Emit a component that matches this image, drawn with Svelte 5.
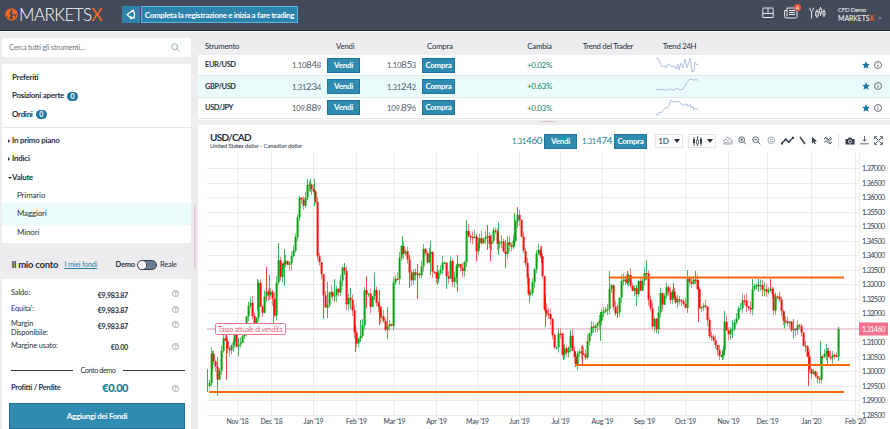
<script>
  const instruments = [
    {
      name: 'EUR/USD',
      sell: ['1.10', '84', '8'],
      buy: ['1.10', '85', '3'],
      change: '+0.02%',
      spark: '0,3 2,2 4,7 6,11 8,9 10,12 12,8 14,9 16,11 18,10 20,13 22,8 23,14 25,7 27,12 29,3 31,12 33,5 34,2 36,16 38,15 39,6 41,9 42,8'
    },
    {
      name: 'GBP/USD',
      sell: ['1.31', '23', '4'],
      buy: ['1.31', '24', '2'],
      change: '+0.63%',
      spark: '0,12 3,13 6,12 9,13 12,13 15,12 18,13 21,11 24,13 27,12 29,9 31,5 33,3 35,2 37,3 39,3 40,2 42,4',
      active: true
    },
    {
      name: 'USD/JPY',
      sell: ['109.', '88', '9'],
      buy: ['109.', '89', '6'],
      change: '+0.03%',
      spark: '0,15 2,16 3,13 5,14 7,11 10,9 12,8 14,4 15,1 17,3 19,2 21,3 23,2 25,5 27,6 29,6 31,5 32,8 34,5 35,9 37,7 38,11 40,9 42,11'
    }
  ];

  const groups = ['Primario', 'Maggiori', 'Minori'];

  const account = [
    { label: 'Saldo:', value: '€9,983.87' },
    { label: "Equita':", value: '€9,983.87' },
    { label: 'Margin Disponibile:', value: '€9,983.87', tall: true },
    { label: 'Margine usato:', value: '€0.00' }
  ];

  const months = [
    [39, "Nov '18"], [73, "Dec '18"], [115, "Jan '19"], [158, "Feb '19"],
    [196, "Mar '19"], [238, "Apr '19"], [279, "May '19"], [321, "Jun '19"],
    [362, "Jul '19"], [404, "Aug '19"], [446, "Sep '19"], [487, "Oct '19"],
    [530, "Nov '19"], [569, "Dec '19"], [613, "Jan '20"], [657, "Feb '20"]
  ];

  const TOP = 152;
  const LEFT = 198;
  const STEP = 14.53;

  // 1.37000 down to 1.28500
  const prices = Array.from({ length: 18 }, (_, i) => ({
    y: 16.5 + i * STEP,
    label: (1.37 - i * 0.005).toFixed(5)
  }));

  // daily closes: x,y
  const track = `208,386 210,388 211,356 214,364 216,374 217.5,389 219,365 222,345 223,335 226,348 228,357 231,343 234,334
    237,345 240,339 243,338 244,330 246,315 248,302 251,303 253,320 256,322 258,286 260,308 262,314 264,295 266,287 268,295
    270,290 272,300 274,318 275,295 277,265 278,260 280,278 282,262 285,260 287,270 290,261 293,253 296,230 298,212 299,198
    302,200 304,206 307,188 309,187 311,190 314,188 316,225 317,260 320,265 322,285 324,309 326,305 328,295 331,292 333,298
    335,293 338,291 340,284 341,268 345,270 346,306 349,300 351,295 353,328 355,343 357,346 359,335 361,332 363,308 364,283
    366,294 368,290 370,305 373,285 375,300 378,310 380,323 382,315 384,325 386,332 388,318 390,327 392,330 393,286 397,280
    399,258 400,243 403,250 406,250 408,262 410,285 413,275 416,272 418,280 420,275 422,250 424,247 426,258 428,262 430,243
    432,270 434,272 437,280 439,272 442,260 444,264 446,280 448,276 450,262 452,278 454,275 457,262 460,265 463,270 465,248
    466,230 469,237 471,240 474,240 476,254 479,238 482,242 485,235 488,240 490,248 492,235 495,233 497,247 500,242 503,250
    505,254 507,240 510,246 512,245 514,225 517,218 520,220 521,245 524,258 526,265 527,293 530,296 532,285 534,275 536,258
    538,252 541,255 543,292 545,318 547,310 549,316 551,322 553,344 556,344 558,332 560,335 562,355 565,350 568,349 570,335
    572,350 575,365 577,358 580,347 583,357 586,357 588,338 590,328 593,325 595,323 598,328 600,312 603,312 606,312 608,296
    610,280 612,300 614,312 617,310 619,295 621,277 624,283 628,280 629,275 632,290 634,284 636,299 638,282 640,290 643,275
    646,272 648,302 650,310 652,324 655,320 656,330 658,310 660,292 662,308 664,292 667,290 669,298 671,295 674,295 676,303
    680,302 683,303 685,310 687,277 690,280 692,286 695,277 698,290 699,312 702,305 705,305 707,322 709,335 711,335 713,343
    716,350 719,354 722,355 725,318 727,330 730,332 732,328 735,320 738,308 741,306 744,298 747,305 750,312 751,292 754,284
    757,290 759,284 761,292 764,289 766,293 769,284 771,288 773,318 775,296 778,300 781,305 783,325 786,318 789,322 792,338
    794,328 797,327 800,325 802,343 805,349 808,356 809,375 811,378 813,372 816,376 818,382 820,362 822,353 824,358 826,352
    828,358 830,362 833,353 836,358 837,350 838,329`
    .trim()
    .split(/\s+/)
    .map((p) => p.split(',').map(Number));

  // long wicks of single days: x, high, low, up
  const spikes = [
    [207, 369, 392, 1], [212, 351, 370, 1], [217, 357, 396, 1], [226, 334, 380, 0], [238, 338, 356, 1],
    [257, 279, 310, 1], [266, 267, 300, 0], [269, 275, 300, 1], [273, 300, 332, 1], [278, 243, 275, 1],
    [284, 249, 286, 1], [307, 179, 200, 1], [310, 179, 192, 1], [314, 179, 206, 1], [323, 284, 319, 0],
    [327, 282, 318, 1], [334, 279, 302, 1], [344, 263, 275, 1], [350, 288, 309, 1], [355, 325, 352, 0],
    [360, 320, 342, 1], [366, 276, 308, 0], [374, 273, 300, 1], [379, 290, 325, 0], [387, 307, 339, 1],
    [402, 236, 255, 1], [409, 255, 288, 0], [417, 264, 299, 0], [430, 241, 275, 1], [437, 265, 285, 1],
    [446, 265, 289, 1], [457, 255, 292, 0], [466, 220, 248, 1], [476, 235, 261, 0], [487, 225, 250, 0],
    [490, 235, 261, 0], [498, 222, 255, 1], [505, 240, 268, 1], [517, 207, 225, 0], [514, 213, 246, 1],
    [529, 291, 303, 1], [541, 246, 263, 0], [545, 295, 327, 0], [563, 345, 360, 0], [570, 330, 340, 1],
    [575, 352, 367, 0], [582, 345, 366, 0], [600, 312, 341, 1], [609, 271, 290, 1], [617, 305, 318, 0],
    [627, 271, 285, 0], [636, 285, 306, 1], [646, 260, 280, 1], [656, 320, 333, 1], [673, 283, 298, 0],
    [687, 270, 312, 1], [695, 271, 284, 1], [698, 280, 322, 0], [722, 350, 360, 1], [724, 311, 345, 1],
    [732, 320, 338, 1], [752, 279, 300, 1], [758, 279, 292, 1], [770, 279, 290, 0], [775, 294, 312, 1],
    [784, 312, 328, 1], [793, 319, 338, 1], [808, 352, 386, 0], [820, 341, 365, 1], [827, 348, 364, 1], [838, 327, 361, 1]
  ];

  // keeps body and wick lengths stable between renders
  let seed = 11;
  function rnd() {
    seed = (seed * 16807) % 2147483647;
    return seed / 2147483647;
  }

  function closeAt(x) {
    const i = track.findIndex((p) => p[0] >= x);
    if (i <= 0) return track[i === 0 ? 0 : track.length - 1][1];
    const [x0, y0] = track[i - 1];
    const [x1, y1] = track[i];
    return y0 + ((y1 - y0) * (x - x0)) / (x1 - x0);
  }

  const candles = [];
  let prev = closeAt(208);
  for (let x = 209; x <= 838.5; x += 1.96) {
    const close = closeAt(x) + (x < 836 ? (rnd() - 0.5) * 8 : 0);
    candles.push({
      x: Math.round(x - LEFT),
      top: Math.min(prev, close) - TOP,
      h: Math.max(1.3, Math.abs(close - prev)),
      high: Math.min(prev, close) - TOP - rnd() * 7,
      low: Math.max(prev, close) - TOP + rnd() * 7,
      up: close <= prev
    });
    prev = close;
  }
</script>

{#snippet info()}
  <svg class="info" width="8" height="8" viewBox="0 0 8 8">
    <circle cx="4" cy="4" r="3.5" />
    <path d="M4 3.6V6M4 2v.8" />
  </svg>
{/snippet}

{#snippet help()}
  <svg class="info" width="7" height="7" viewBox="0 0 8 8">
    <circle cx="4" cy="4" r="3.5" />
    <path d="M2.9 3.1Q3 2 4 2t1.1 1Q5.1 3.6 4 4.2v.6M4 5.6v.7" />
  </svg>
{/snippet}

<div class="app">
  <header>
    <div class="logo">
      <svg width="13" height="13" viewBox="0 0 13 13">
        <circle cx="6.5" cy="6.5" r="5.6" fill="none" stroke="#f26a1b" stroke-width="1.2" />
        <path d="M1 4.5l2.500-3 2.500.5-.6 1.600L4 5l1.600 1.600L5 9l-1.200 2L2.600 8 1 6.500zM7 1.500l3 .8 1.800 3.200-.8 1-1.600-.6-1.400.6L7 5l.8-1.400zM7.500 7.500l2.500.3.6 1.400L8.600 11.600 7.400 10z" fill="#f26a1b" />
      </svg>
      <span>MARKETS<b>X</b></span>
    </div>
    <div class="promo">
      <span class="promo-icon">
        <svg width="11" height="11" viewBox="0 0 11 11">
          <path d="M1.2 5.5L7.2 1.2Q9.5 5 8 9L3 7.4zM4 8l1 1.8 1.8-.9" fill="none" stroke="#fff" stroke-width="1.2" />
        </svg>
      </span>
      <span class="promo-text">Completa la registrazione e inizia a fare trading</span>
    </div>
    <div class="tools">
      <svg width="12" height="12" viewBox="0 0 12 12">
        <path d="M.8 5.5V2.2Q.8 1 2 1h8q1.2 0 1.2 1.2v3.3M6 1v6M.5 6.5h11M.8 5.5v5h10.4v-5" />
      </svg>
      <div class="news">
        <svg width="14" height="12" viewBox="0 0 14 12">
          <path d="M3 1h10v8.5q0 1.5-1.5 1.5H2Q.6 11 .6 9.5V3.5H3M3 1v8.5M5 3.5h6M5 5.5h6M5 7.5h6" />
        </svg>
        <i>4</i>
      </div>
      <svg width="17" height="12" viewBox="0 0 17 12">
        <path d="M1 .8v2.4L2.6 4.5 4.2 3.2V.8M2.6 4.5v7M8 2.5v2M8 9v2M6.8 4.5h2.4V9H6.800zM11.5 0v2M11.5 6v3M10.3 2h2.400v4h-2.400zM15 2.5v2M15 8v2M14 4.500h2V8h-2z" />
      </svg>
    </div>
    <div class="user">
      <div>CFD Demo</div>
      <div>MARKETS<b>X</b></div>
    </div>
    <span class="caret light"></span>
  </header>

  <div class="body">
    <aside>
      <div class="search">
        <span>Cerca tutti gli strumenti...</span>
        <svg width="9" height="9" viewBox="0 0 9 9">
          <path d="M6 6l2.4 2.4M6.6 3.7a2.9 2.9 0 1 1-5.8 0 2.9 2.9 0 0 1 5.8 0z" fill="none" stroke="#7fa9a9" stroke-width=".9" />
        </svg>
      </div>

      <nav>
        <div class="links">
          <div>Preferiti</div>
          <div>Posizioni aperte <i class="count">0</i></div>
          <div>Ordini <i class="count">0</i></div>
        </div>
        <div class="tree">
          <div class="branch"><i class="closed"></i>In primo piano</div>
          <div class="branch"><i class="closed"></i>Indici</div>
          <div class="branch"><i class="open"></i>Valute</div>
          {#each groups as group}
            <div class="leaf" class:selected={group === 'Maggiori'}>{group}</div>
          {/each}
        </div>
      </nav>

      <div class="account-head">
        <strong>Il mio conto</strong>
        <u>I miei fondi</u>
        <span class="demo">Demo</span>
        <span class="toggle"></span>
        <span>Reale</span>
      </div>

      <section class="account">
        {#each account as row}
          <div class="money" class:tall={row.tall}>
            <span>{row.label}</span>
            <b>{row.value}</b>
            {@render help()}
          </div>
        {/each}
        <div class="divider">Conto demo</div>
        <div class="profit">
          <span>Profitti / Perdite</span>
          <b>€0.00</b>
          {@render help()}
        </div>
        <div class="fund">Aggiungi dei Fondi</div>
      </section>
    </aside>

    <div class="gutter"><span></span></div>

    <main>
      <div class="row head">
        <span>Strumento</span>
        <span class="h-sell">Vendi</span>
        <span class="h-buy">Compra</span>
        <span class="change">Cambia</span>
        <span class="mid">Trend del Trader</span>
        <span class="mid">Trend 24H</span>
      </div>
      <div class="quotes">
        {#each instruments as item}
          <div class="row" class:active={item.active}>
            <span class="name">{item.name}</span>
            <span class="deal"><span class="price">{item.sell[0]}<em>{item.sell[1]}</em>{item.sell[2]}</span><span class="btn">Vendi</span></span>
            <span class="deal"><span class="price">{item.buy[0]}<em>{item.buy[1]}</em>{item.buy[2]}</span><span class="btn">Compra</span></span>
            <span class="change green">{item.change}</span>
            <span></span>
            <svg class="spark" width="43" height="18" viewBox="0 0 43 18">
              <polyline points={item.spark} />
            </svg>
            <span class="marks">
              <svg width="8" height="8" viewBox="0 0 8 8">
                <path d="M4 .2l1.1 2.5 2.8.3-2.1 1.8.7 2.8L4 6.2 1.5 7.6l.7-2.8L.1 3l2.8-.3z" fill="#1f73a0" />
              </svg>
              {@render info()}
            </span>
          </div>
        {/each}
      </div>
      <div class="splitter"><span></span></div>

      <section class="chart">
        <div class="chart-head">
          <div class="pair">
            <h2>USD/CAD</h2>
            <p>United States dollar - Canadian dollar</p>
          </div>
          <div class="trade">
            <span class="price">1.31<em>460</em></span><span class="btn">Vendi</span>
            <span class="price second">1.31<em>474</em></span><span class="btn">Compra</span>
          </div>
          <div class="select">1D <i class="caret"></i></div>
          <div class="select kind">
            <svg width="11" height="11" viewBox="0 0 11 11">
              <path d="M2 1v9M5.5 0v10M9 1v9" stroke="#333c4b" stroke-width=".8" />
              <path d="M1 3h2v4H1zM8 3h2v4.5H8z" fill="#333c4b" />
              <path d="M4.5 4h2v4h-2z" fill="#fff" stroke="#333c4b" stroke-width=".7" />
            </svg>
            <i class="caret"></i>
          </div>
          <div class="icons">
            <svg class="faint" width="10" height="10" viewBox="0 0 10 10"><path d="M1 8V4l2-1 2 2 2-3 2 2v4zM1 8l3-2 2 1 3-2M3 1l3 1" /></svg>
            <svg width="9" height="9" viewBox="0 0 9 9"><circle cx="3.7" cy="3.7" r="2.9" /><path d="M5.9 5.9l2.4 2.4M2.2 3.7h3M3.7 2.2v3" /></svg>
            <svg width="9" height="9" viewBox="0 0 9 9"><circle cx="3.7" cy="3.7" r="2.9" /><path d="M5.9 5.9l2.4 2.4M2.2 3.7h3" /></svg>
            <svg class="faint" width="9" height="9" viewBox="0 0 9 9"><circle cx="4.3" cy="4.3" r="3.4" /><path d="M2.6 3.2h3.4M2.6 5.4h3.4" /></svg>
            <svg class="bold" width="13" height="9" viewBox="0 0 13 9"><path d="M1 7.3l3.7-4 3 2.7L12 1.8" /><path d="M0 6.5h2v2H0zM3.8 2.4h2v2h-2zM6.8 5h2v2h-2zM11 .8h2v2h-2z" fill="#333c4b" stroke="none" /></svg>
            <svg class="bold" width="7" height="9" viewBox="0 0 7 9"><path d="M1 1l5 7" /></svg>
            <svg width="7" height="9" viewBox="0 0 7 9"><path d="M1 .8l5 4.4-2.4.2 1.3 2.4-1 .5-1.2-2.4L1 7.4z" fill="#333c4b" stroke="none" /></svg>
            <svg width="10" height="9" viewBox="0 0 10 9"><path d="M1 3q2-3 4 0t4-1M1 6.5q2-3 4 0t4-1M2 1l6 7M8 1L6 3" /></svg>
            <span class="sep"></span>
            <svg width="10" height="8" viewBox="0 0 10 8"><path d="M.5 2H3L3.800.6h2.400L7 2h2.500v5.500h-9z" fill="#333c4b" stroke="none" /><circle cx="5" cy="4.5" r="1.6" stroke="#fff" stroke-width=".8" /></svg>
            <svg width="9" height="9" viewBox="0 0 9 9"><path d="M4.5 0v5M2.7 3.5l1.8 1.8 1.8-1.8M.2 7.8h8.600" /></svg>
            <svg width="9" height="9" viewBox="0 0 9 9"><path d="M.6 3V.6H3M6 .6h2.4V3M8.4 6v2.4H6M3 8.4H.6V6M1 1l7 7M8 1L1 8" /></svg>
          </div>
        </div>

        <svg class="plot" width="692" height="277" viewBox="0 0 692 277">
          <g class="grid">
            {#each prices as p}
              <path d="M9 {Math.floor(p.y)}.5H662" />
            {/each}
            {#each months as m}
              <path d="M{m[0]}.5 0V263" />
            {/each}
            <path d="M661.5 0V263" />
          </g>
          <path d="M9 177H662" stroke="#eac3d9" stroke-width="1.6" />
          {#each candles as c}
            <path d="M{c.x + 0.5} {c.high}V{c.low}" stroke={c.up ? '#5fbf74' : '#f4827c'} />
          {/each}
          {#each spikes as s}
            <path d="M{s[0] - LEFT + 0.5} {s[1] - TOP}V{s[2] - TOP}" stroke={s[3] ? '#3cb450' : '#f8433c'} />
          {/each}
          {#each candles as c}
            <rect x={c.x - 0.4} y={c.top} width="2" height={c.h} fill={c.up ? '#07a30f' : '#fb0d0d'} />
          {/each}
          <g class="levels">
            <path d="M411 125.5H646" />
            <path d="M377 213H652" />
            <path d="M11 240H646" />
          </g>
          <rect x="17.5" y="171.5" width="70" height="11" rx="1" fill="#fff" stroke="#ee7590" />
          <text class="rate" x="20" y="180" textLength="64">Tasso attuale di vendita</text>
          {#each prices as p, i}
            {#if i !== 11}
              <text x="664" y={p.y + 2.5} textLength="23">{p.label}</text>
            {/if}
          {/each}
          <rect x="661" y="170.5" width="29" height="13" fill="#f5728f" />
          <text class="now" x="664" y="179.5" textLength="23">1.31460</text>
          {#each months as m}
            <text class="month" x={m[0] + 0.5} y="272">{m[1]}</text>
          {/each}
        </svg>
      </section>
    </main>
  </div>
</div>

<style>
  :global(body) {
    margin: 0;
    background: #ededef;
  }

  .app {
    width: 890px;
    height: 429px;
    overflow: hidden;
    display: flex;
    flex-direction: column;
    background: #ededef;
    color: #26313f;
    font-family: Lato, "Open Sans", sans-serif;
    font-size: 8px;
    line-height: 1;
    letter-spacing: -0.2px;
  }

  .app :global(svg) {
    flex: none;
    display: block;
  }

  i,
  em {
    font-style: normal;
  }

  /* top bar */
  header {
    box-sizing: border-box;
    height: 31px;
    flex: none;
    display: flex;
    align-items: center;
    padding-left: 5px;
    background: #434a59;
    border-bottom: 1px solid #1d2233;
    color: #fff;
  }

  .logo {
    display: flex;
    align-items: center;
    gap: 1px;
    width: 117px;
    margin-top: -1px;
    font-size: 17px;
    font-weight: 300;
    letter-spacing: -0.55px;
  }

  .logo b,
  .user b {
    color: #f26a1b;
  }

  .promo {
    display: flex;
    height: 17px;
    margin-top: -1px;
  }

  .promo-icon {
    width: 18px;
    display: flex;
    align-items: center;
    justify-content: center;
    background: #2c83ac;
  }

  .promo-text {
    box-sizing: border-box;
    width: 157px;
    margin-left: 1px;
    display: flex;
    align-items: center;
    justify-content: center;
    border: 1px solid #58b6da;
    background: #2c83ac;
    font-size: 8px;
    font-weight: 700;
    letter-spacing: -0.34px;
    white-space: nowrap;
  }

  .tools {
    display: flex;
    align-items: center;
    gap: 10px;
    margin-left: auto;
    margin-top: -4px;
  }

  .tools svg {
    fill: none;
    stroke: #e8ebef;
    stroke-width: 1;
  }

  .news {
    position: relative;
    margin-right: 1px;
  }

  .news i {
    position: absolute;
    top: -3px;
    right: -3px;
    width: 7px;
    height: 7px;
    border-radius: 50%;
    background: #f0553a;
    font-size: 6px;
    line-height: 7px;
    text-align: center;
  }

  .user {
    width: 37px;
    margin: -2px 0 0 12px;
    font-size: 7px;
    line-height: 9px;
    letter-spacing: -0.1px;
  }

  .user div:first-child {
    font-size: 6px;
    letter-spacing: -0.2px;
  }

  .caret {
    border: 3px solid transparent;
    border-top: 4px solid #26313f;
    border-bottom: 0;
  }

  .caret.light {
    margin: 6px 8px 0 3px;
    border-width: 2.5px;
    border-top: 3px solid #79839a;
    border-bottom: 0;
  }

  .body {
    flex: 1;
    min-height: 0;
    display: flex;
    border-top: 1px solid #fff;
  }

  /* sidebar */
  aside {
    width: 189px;
    margin-left: 2px;
    display: flex;
    flex-direction: column;
  }

  .search {
    box-sizing: border-box;
    height: 19px;
    flex: none;
    margin-top: 6px;
    padding: 0 11px 0 7px;
    display: flex;
    align-items: center;
    justify-content: space-between;
    background: #fff;
    border-radius: 2px;
    color: #6d7784;
    font-size: 7.4px;
    letter-spacing: -0.22px;
  }

  nav {
    flex: none;
    margin-top: 7px;
    background: #fff;
    font-weight: 700;
  }

  .links {
    height: 64px;
    padding: 5px 10px 0;
    box-sizing: border-box;
    border-bottom: 1px solid #e6e7e9;
    font-size: 7.9px;
    letter-spacing: -0.25px;
  }

  .links div {
    height: 18.2px;
    display: flex;
    align-items: center;
    gap: 3px;
  }

  .count {
    width: 11px;
    height: 9px;
    border-radius: 5px;
    background: #1f74a0;
    color: #fff;
    font-size: 7px;
    line-height: 9px;
    text-align: center;
  }

  .tree {
    padding-top: 4px;
    font-size: 7.9px;
    letter-spacing: -0.22px;
  }

  .branch {
    height: 18.3px;
    padding-left: 6px;
    display: flex;
    align-items: center;
  }

  .branch i {
    width: 0;
    border: 2px solid transparent;
  }

  .branch .closed {
    border-left-color: #26313f;
    border-right-width: 0;
    margin-right: 2px;
  }

  .branch .open {
    border-top-color: #26313f;
    border-bottom-width: 0;
  }

  .leaf {
    box-sizing: border-box;
    height: 17px;
    padding: 2px 0 0 15px;
    display: flex;
    align-items: center;
    font-weight: 400;
    letter-spacing: -0.1px;
  }

  .leaf:last-child {
    height: 18px;
    padding-top: 0;
    padding-bottom: 1px;
  }

  .leaf.selected {
    height: 22px;
    margin-top: -1px;
    padding-top: 0;
    background: #e9fbfb;
  }

  .account-head {
    height: 35px;
    margin-top: auto;
    padding: 6px 0 0 9.5px;
    box-sizing: border-box;
    display: flex;
    align-items: center;
    font-size: 7.5px;
    white-space: nowrap;
  }

  .account-head strong {
    width: 53px;
    font-size: 9.5px;
    letter-spacing: -0.25px;
  }

  .account-head u {
    width: 51px;
    color: #2c7fa9;
    font-size: 7.2px;
    letter-spacing: -0.2px;
  }

  .demo {
    font-weight: 700;
  }

  .toggle {
    box-sizing: border-box;
    width: 20px;
    height: 10px;
    margin: 0 3px 0 2px;
    border: 1px solid #333e50;
    border-radius: 5px;
    background: radial-gradient(circle at 4px 4px, #fff 4px, #333e50 4.5px, #6a7b92 5px);
  }

  .account {
    box-sizing: border-box;
    height: 150px;
    flex: none;
    padding: 10px 6px 0 7px;
    background: #fff;
  }

  .money {
    height: 15.5px;
    display: flex;
    padding: 0 6px 0 2px;
    font-size: 7.4px;
    line-height: 9px;
    letter-spacing: -0.1px;
  }

  .money.tall {
    height: 21.5px;
  }

  .money span {
    width: 54px;
    margin-top: -1px;
  }

  .money b {
    width: 63px;
    margin-top: 1.5px;
    text-align: right;
    font-size: 7.2px;
    letter-spacing: -0.25px;
  }

  .money :global(svg),
  .profit :global(svg) {
    margin: 1px 0 0 auto;
    stroke: #7f8b90;
  }

  .divider {
    display: flex;
    align-items: center;
    gap: 7px;
    height: 9px;
    margin: 9px 0 0 2px;
    font-size: 7.2px;
    white-space: nowrap;
    letter-spacing: -0.4px;
  }

  .divider::before,
  .divider::after {
    content: "";
    flex: 1;
    height: 1px;
    background: #333c4b;
  }

  .profit {
    display: flex;
    align-items: center;
    height: 14px;
    margin-top: 5.5px;
    padding: 0 6px 0 2px;
    font-size: 7.5px;
    font-weight: 700;
    letter-spacing: -0.3px;
  }

  .profit span {
    width: 68px;
    white-space: nowrap;
  }

  .profit b {
    width: 49px;
    color: #168094;
    font-size: 11px;
    letter-spacing: -0.5px;
    text-align: right;
  }

  .fund {
    box-sizing: border-box;
    height: 26px;
    margin-top: 8px;
    display: flex;
    align-items: center;
    justify-content: center;
    border: 1px solid #216f94;
    background: #2f8bb0;
    color: #fff;
    font-size: 8px;
    font-weight: 700;
    letter-spacing: -0.3px;
  }

  .gutter {
    width: 7px;
    display: flex;
    justify-content: center;
  }

  .gutter span {
    width: 2px;
    height: 64px;
    margin-top: 173px;
    background: #e6cbdd;
  }

  /* quotes */
  main {
    flex: 1;
    display: flex;
    flex-direction: column;
  }

  .row {
    box-sizing: border-box;
    height: 21.3px;
    display: grid;
    grid-template-columns: 72px 83px 95px 116px 74px 69px 1fr;
    align-items: center;
    padding: 0 8px 0 7px;
    border-bottom: 1px solid #e4e7ea;
    background: #fff;
  }

  .row.head {
    height: 23px;
    padding-top: 6px;
    border: 0;
    background: none;
    font-size: 7.8px;
  }

  .row.active {
    background: #e9fbfb;
  }

  .h-sell {
    padding-left: 59px;
  }

  .h-buy {
    padding-left: 67px;
  }

  .quotes {
    height: 65px;
    background: #fff;
  }

  .name {
    font-size: 7.4px;
    font-weight: 700;
    letter-spacing: -0.35px;
  }

  .deal {
    display: flex;
    align-items: center;
    justify-content: flex-end;
    gap: 6px;
  }

  .price {
    color: #52606e;
    font-size: 7.7px;
    letter-spacing: -0.3px;
  }

  .price em {
    font-size: 9.8px;
  }

  .btn {
    box-sizing: border-box;
    width: 33px;
    height: 15px;
    flex: none;
    border: 1px solid #20739c;
    background: #2f8bb0;
    color: #fff;
    font-size: 8px;
    font-weight: 700;
    line-height: 13px;
    text-align: center;
    letter-spacing: -0.3px;
  }

  .change {
    padding-left: 53px;
    text-align: center;
  }

  .green {
    color: #12836b;
    font-size: 8px;
    letter-spacing: -0.3px;
  }

  .mid {
    text-align: center;
    white-space: nowrap;
    letter-spacing: -0.3px;
  }

  .spark {
    margin-left: 11px;
  }

  .spark polyline {
    fill: none;
    stroke: #b3c1e0;
    stroke-width: 1;
  }

  .marks {
    display: flex;
    justify-content: flex-end;
    gap: 4px;
  }

  .info {
    fill: none;
    stroke: #46515f;
    stroke-width: 0.8;
  }

  .splitter {
    height: 5px;
    display: flex;
    padding-left: 343px;
  }

  .splitter span {
    width: 14px;
    height: 1px;
    margin-top: 1px;
    background: #e6bcd2;
  }

  /* chart */
  .chart {
    flex: 1;
    background: #fff;
  }

  .chart-head {
    height: 27px;
    display: flex;
    align-items: center;
  }

  .pair {
    width: 302px;
    padding: 4px 0 0 12px;
  }

  .pair h2 {
    margin: 0;
    font-size: 10px;
    font-weight: 700;
    line-height: 11px;
    letter-spacing: -0.75px;
  }

  .pair p {
    margin: 0;
    font-size: 6px;
    line-height: 6px;
    letter-spacing: -0.15px;
  }

  .trade {
    display: flex;
    align-items: center;
    margin-top: 5px;
  }

  .trade .price {
    width: 32px;
    color: #168094;
  }

  .trade .second {
    margin-left: 5px;
  }

  .select {
    box-sizing: border-box;
    width: 28px;
    height: 14px;
    margin: 5px 0 0 8px;
    display: flex;
    align-items: center;
    justify-content: center;
    gap: 5px;
    border: 1px solid #e3e5e8;
    font-size: 8.2px;
    white-space: nowrap;
  }

  .kind {
    margin-left: 5px;
    gap: 4px;
  }

  .icons {
    display: flex;
    align-items: center;
    justify-content: space-between;
    width: 160px;
    margin: 4px 0 0 7px;
  }

  .icons svg {
    fill: none;
    stroke: #4b5663;
    stroke-width: 0.9;
  }

  .icons .faint {
    stroke: #9aa2ab;
  }

  .icons .bold {
    stroke: #333c4b;
    stroke-width: 1.4;
  }

  .sep {
    width: 1px;
    height: 14px;
    background: #dfe1e4;
  }

  .grid path {
    stroke: #ebebec;
  }

  .levels path {
    stroke: #fc6a0c;
    stroke-width: 2.2;
  }

  .plot text {
    fill: #333e4c;
    font-size: 7.2px;
  }

  .plot .month {
    text-anchor: middle;
    font-size: 6.9px;
  }

  .plot .rate {
    fill: #e0607c;
    font-size: 6.7px;
  }

  .plot .now {
    fill: #fff;
  }
</style>
